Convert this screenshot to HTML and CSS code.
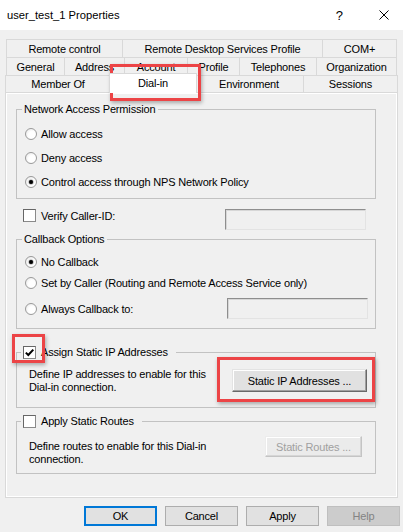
FILE: index.html
```html
<!DOCTYPE html>
<html lang="en">
<head>
  <meta charset="UTF-8" />
  <meta name="viewport" content="width=device-width, initial-scale=1.0"/>
  <title>user_test_1 Properties</title>
  <link rel="stylesheet" href="styles.css">
</head>
<body>
  <div class="window">

    <div class="titlebar">
      <span class="title">user_test_1 Properties</span>
      <span class="help-q">?</span>
      <span class="close-x">
        <svg width="10" height="10" viewBox="0 0 10 10">
          <path d="M0.5 0.5 L9.5 9.5 M9.5 0.5 L0.5 9.5" stroke="#000" stroke-width="1" fill="none"/>
        </svg>
      </span>
    </div>

    <div class="tabs">
      <div class="tab-row row-1">
        <div class="tab">Remote control</div>
        <div class="tab">Remote Desktop Services Profile</div>
        <div class="tab">COM+</div>
      </div>
      <div class="tab-row row-2">
        <div class="tab">General</div>
        <div class="tab">Address</div>
        <div class="tab">Account</div>
        <div class="tab">Profile</div>
        <div class="tab">Telephones</div>
        <div class="tab">Organization</div>
      </div>
      <div class="tab-row row-3">
        <div class="tab">Member Of</div>
        <div class="tab active">Dial-in</div>
        <div class="tab">Environment</div>
        <div class="tab">Sessions</div>
      </div>
    </div>

    <div class="panel">
      <fieldset class="group group-access">
        <legend>Network Access Permission</legend>
        <label class="option"><span class="radio"></span>Allow access</label>
        <label class="option"><span class="radio"></span>Deny access</label>
        <label class="option"><span class="radio checked"></span>Control access through NPS Network Policy</label>
      </fieldset>

      <div class="verify-row">
        <label class="option"><span class="check"></span>Verify Caller-ID:</label>
        <span class="textbox"></span>
      </div>

      <fieldset class="group group-callback">
        <legend>Callback Options</legend>
        <label class="option row-a"><span class="radio checked"></span>No Callback</label>
        <label class="option row-b"><span class="radio"></span>Set by Caller (Routing and Remote Access Service only)</label>
        <div class="option row-c">
          <span class="radio"></span>Always Callback to:
          <span class="textbox"></span>
        </div>
      </fieldset>

      <fieldset class="group group-static">
        <legend class="check-legend">
          <span class="check checked">
            <svg width="11" height="11" viewBox="0 0 11 11">
              <path d="M1.8 5.6 L4.3 8 L9.3 2.6" stroke="#000" stroke-width="2" fill="none"/>
            </svg>
          </span>Assign Static IP Addresses
        </legend>
        <div class="group-body">
          <p>Define IP addresses to enable for this<br>Dial-in connection.</p>
          <button class="btn-classic">Static IP Addresses ...</button>
        </div>
      </fieldset>

      <fieldset class="group group-routes">
        <legend class="check-legend"><span class="check"></span>Apply Static Routes</legend>
        <div class="group-body">
          <p>Define routes to enable for this Dial-in<br>connection.</p>
          <button class="btn-classic" disabled>Static Routes ...</button>
        </div>
      </fieldset>
    </div>

    <div class="actions">
      <button class="btn btn-default">OK</button>
      <button class="btn">Cancel</button>
      <button class="btn">Apply</button>
      <button class="btn" disabled>Help</button>
    </div>

    <div class="mark mark-tab"></div>
    <div class="mark mark-check"></div>
    <div class="mark mark-button"></div>
  </div>
</body>
</html>
```

FILE: styles.css
```css
* {
  box-sizing: border-box;
}

body {
  margin: 0;
  font-family: "Liberation Sans", Arial, sans-serif;
  font-size: 11px;
  letter-spacing: -0.17px;
  color: #000;
  background-color: #f0f0f0;
}

.window {
  position: relative;
  width: 403px;
  height: 532px;
  overflow: hidden;
}

/* title bar */

.titlebar {
  display: flex;
  align-items: center;
  height: 30px;
  padding: 0 14px 0 7px;
  background-color: #fff;
}

.title {
  font-size: 11.2px;
  letter-spacing: 0;
}

.help-q {
  margin-left: auto;
  font-size: 13px;
  letter-spacing: 0;
}

.close-x {
  display: flex;
  margin-left: 36px;
}

/* tabs */

.tabs {
  margin: 9px 6px 0;
}

.tab-row {
  display: grid;
  height: 18px;
}

.row-1 {
  grid-template-columns: 117px 200px 1fr;
}

.row-2 {
  grid-template-columns: 59px 60px 63px 52px 77px 1fr;
}

.row-3 {
  grid-template-columns: 106px 84px 109px 1fr;
  height: 17px;
  margin: 0 -1px;
}

.tab {
  display: flex;
  align-items: center;
  justify-content: center;
  white-space: nowrap;
  border-top: 1px solid #d9d9d9;
  border-right: 1px solid #d9d9d9;
}

.tab:first-child {
  border-left: 1px solid #d9d9d9;
}

.tab.active {
  position: relative;
  z-index: 1;
  margin: -2px -2px -1px;
  padding-bottom: 2px;
  background-color: #fff;
  border-left: 1px solid #d9d9d9;
}

/* panel */

.panel {
  margin: 0 5px;
  padding: 9px 21px 23px 10px;
  border: 1px solid #d9d9d9;
  box-shadow: inset 0 0 0 1px #fff;
}

.group {
  margin: 0;
  padding: 0;
  min-width: 0;
  border: 1px solid #c2c2c2;
}

.group legend {
  margin-left: 5px;
  padding: 0 3px 0 2px;
  line-height: 14px;
}

.group .check-legend {
  display: flex;
  align-items: center;
  margin-left: 4px;
  padding: 0 8px 0 2px;
}

.option {
  display: flex;
  align-items: center;
  height: 24px;
  padding-left: 8px;
  white-space: nowrap;
}

.radio {
  position: relative;
  flex: none;
  width: 12px;
  height: 12px;
  margin-right: 4px;
  border: 1px solid #9a9a9a;
  border-radius: 50%;
  background: radial-gradient(circle at 60% 60%, #fff 40%, #e2e2e2 100%);
}

.radio.checked::after {
  content: "";
  position: absolute;
  left: 3px;
  top: 3px;
  width: 4px;
  height: 4px;
  border-radius: 50%;
  background-color: #000;
  box-shadow: 0 0 1px 0.5px #888;
}

.check {
  display: flex;
  align-items: center;
  justify-content: center;
  flex: none;
  width: 13px;
  height: 13px;
  margin-right: 5px;
  border: 1px solid #8a8a8a;
  border-top-color: #666;
  border-left-color: #666;
  background-color: #fff;
}

.textbox {
  flex: none;
  width: 141px;
  height: 21px;
  border: 1px solid #e3e3e3;
  border-top-color: #8e8e8e;
  border-left-color: #8e8e8e;
  box-shadow: inset 1px 1px 0 #d7d7d7;
  background-color: #f0f0f0;
}

.verify-row {
  display: flex;
  align-items: flex-start;
  height: 21px;
  margin-top: 10px;
}

.verify-row .option {
  flex: 1;
  height: 13px;
  padding-left: 7px;
}

.verify-row .textbox {
  margin-right: 10px;
}

.group-access {
  padding: 6px 0 4px;
}

.group-callback {
  margin-top: 2px;
  padding: 6px 0 9px;
}

.group-callback .row-a {
  height: 20px;
}

.group-callback .row-b {
  height: 21px;
}

.group-callback .row-c {
  height: 21px;
  margin-top: 5px;
}

.row-c .textbox {
  margin: 0 7px 0 auto;
}

.group-static {
  margin-top: 16px;
}

.group-routes {
  margin-top: 6px;
}

.group-body {
  display: flex;
  justify-content: space-between;
  align-items: flex-start;
}

.group-body p {
  margin: 0;
  line-height: 13px;
}

.group-static .group-body {
  padding: 9px 8px 13px 12px;
}

.group-routes .group-body {
  padding: 8px 13px 7px 12px;
}

.group-routes .group-body p {
  margin-top: 4px;
}

.btn-classic {
  padding: 0;
  font-family: inherit;
  font-size: 11px;
  letter-spacing: -0.17px;
  color: #000;
  border: 1px solid;
  border-color: #e3e3e3 #696969 #696969 #e3e3e3;
  box-shadow: inset -1px -1px 0 #a0a0a0, inset 1px 1px 0 #fff;
  background-color: #e1e1e1;
}

.group-static .btn-classic {
  width: 135px;
  height: 23px;
  margin-top: 1px;
}

.group-routes .btn-classic {
  width: 97px;
  height: 21px;
}

.btn-classic:disabled {
  color: #a0a0a0;
  border-color: #ececec #c4c4c4 #c4c4c4 #ececec;
  box-shadow: inset -1px -1px 0 #d6d6d6, inset 1px 1px 0 #fff;
  background-color: #ebebeb;
}

/* dialog buttons */

.actions {
  display: flex;
  justify-content: flex-end;
  gap: 8px;
  margin-top: 8px;
  padding-right: 3px;
}

.btn {
  width: 73px;
  height: 20px;
  padding: 0;
  font-family: inherit;
  font-size: 11px;
  letter-spacing: -0.17px;
  color: #000;
  border: 1px solid #adadad;
  background-color: #e1e1e1;
}

.btn-default {
  border: 2px solid #0078d7;
}

.btn:disabled {
  color: #838383;
  border-color: #bfbfbf;
  background-color: #cccccc;
}

/* red highlight marks laid over the dialog */

.mark {
  position: absolute;
  border: 3px solid #ec4446;
  box-shadow: 1px 2px 4px rgba(0, 0, 0, 0.3);
  pointer-events: none;
}

.mark-tab {
  left: 110px;
  top: 64px;
  width: 91px;
  height: 37px;
}

.mark-check {
  left: 12px;
  top: 334px;
  width: 33px;
  height: 29px;
}

.mark-button {
  left: 217px;
  top: 357px;
  width: 158px;
  height: 45px;
}
```
